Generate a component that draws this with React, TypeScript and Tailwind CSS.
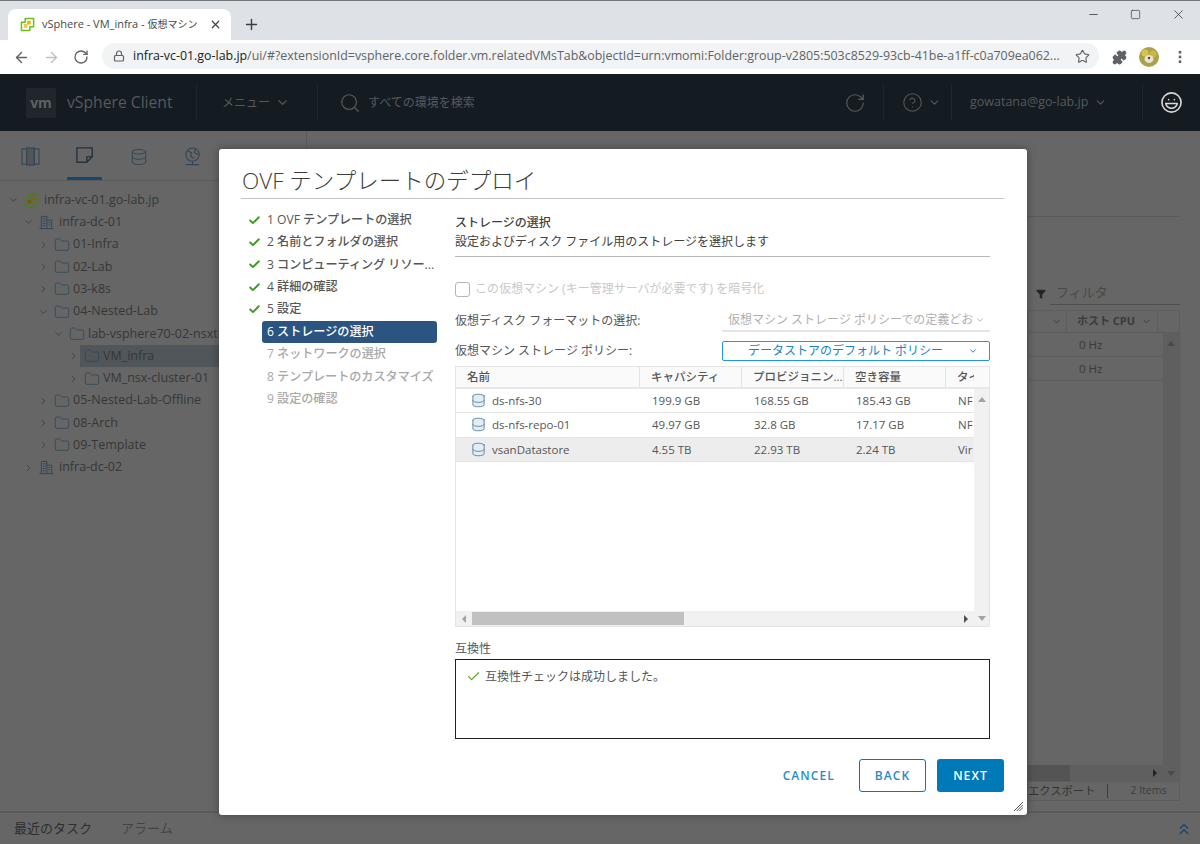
import { ArrowLeft, ArrowRight, Check, ChevronDown, ChevronRight, ChevronsUp, CircleHelp, Database, Filter, Folder, Laugh, Lock, Minus, MoreVertical, Plus, Puzzle, RotateCw, Search, Square, Star, X } from "lucide-react";

const tree = [
  { label: "infra-vc-01.go-lab.jp", pad: "pl-[8px]", open: true, icon: "vc" },
  { label: "infra-dc-01", pad: "pl-[23px]", open: true, icon: "dc" },
  { label: "01-Infra", pad: "pl-[38px]", open: false, icon: "folder" },
  { label: "02-Lab", pad: "pl-[38px]", open: false, icon: "folder" },
  { label: "03-k8s", pad: "pl-[38px]", open: false, icon: "folder" },
  { label: "04-Nested-Lab", pad: "pl-[38px]", open: true, icon: "folder" },
  { label: "lab-vsphere70-02-nsxt-01", pad: "pl-[53px]", open: true, icon: "folder" },
  { label: "VM_infra", pad: "pl-[68px]", open: false, icon: "folder", selected: true },
  { label: "VM_nsx-cluster-01", pad: "pl-[68px]", open: false, icon: "folder" },
  { label: "05-Nested-Lab-Offline", pad: "pl-[38px]", open: false, icon: "folder" },
  { label: "08-Arch", pad: "pl-[38px]", open: false, icon: "folder" },
  { label: "09-Template", pad: "pl-[38px]", open: false, icon: "folder" },
  { label: "infra-dc-02", pad: "pl-[23px]", open: false, icon: "dc" },
];

const steps = [
  { label: "1 OVF テンプレートの選択", state: "done" },
  { label: "2 名前とフォルダの選択", state: "done" },
  { label: "3 コンピューティング リソー...", state: "done" },
  { label: "4 詳細の確認", state: "done" },
  { label: "5 設定", state: "done" },
  { label: "6 ストレージの選択", state: "active" },
  { label: "7 ネットワークの選択", state: "todo" },
  { label: "8 テンプレートのカスタマイズ", state: "todo" },
  { label: "9 設定の確認", state: "todo" },
];

const stores = [
  { name: "ds-nfs-30", cap: "199.9 GB", prov: "168.55 GB", free: "185.43 GB", type: "NF" },
  { name: "ds-nfs-repo-01", cap: "49.97 GB", prov: "32.8 GB", free: "17.17 GB", type: "NF" },
  { name: "vsanDatastore", cap: "4.55 TB", prov: "22.93 TB", free: "2.24 TB", type: "Vir", selected: true },
];

function VcLogo({ dim }: { dim?: boolean }) {
  return (
    <svg viewBox="0 0 16 16" className="h-[15px] w-[15px] shrink-0" fill="none">
      <path d="M5.5 1.5h9v9h-4v4h-9v-9h4z" stroke={dim ? "#4f7a1e" : "#6cbf1f"} strokeWidth="1.6" strokeLinejoin="round" />
      <rect x="7.5" y="4" width="4" height="4" fill={dim ? "#7a6420" : "#f2b21b"} />
      <rect x="4" y="7.5" width="4" height="4" fill={dim ? "#6e5a20" : "#f5c842"} />
    </svg>
  );
}

function DcIcon() {
  return (
    <svg viewBox="0 0 16 16" className="h-[15px] w-[15px] shrink-0" fill="none" stroke="#2f4756" strokeWidth="1">
      <path d="M2.5 14.5v-13h6v13M8.5 5.5h5v9M.5 14.5h15" />
      <path d="M4 4h3M4 6.5h3M4 9h3M4 11.5h3M10 8h2M10 10.5h2" />
    </svg>
  );
}

function TreeRow({ item }: { item: (typeof tree)[number] }) {
  return (
    <div className={`flex h-[22.3px] items-center ${item.pad}`}>
      <span className="flex w-[11px] shrink-0 justify-center text-[#3a3a3a]">
        {item.open ? <ChevronDown size={14} strokeWidth={1.7} /> : <ChevronRight size={14} strokeWidth={1.7} />}
      </span>
      <div className={`ml-[1px] flex h-full flex-1 items-center whitespace-nowrap pl-[4px] ${item.selected ? "bg-[#50565a]" : ""}`}>
        {item.icon === "vc" && <VcLogo dim />}
        {item.icon === "dc" && <DcIcon />}
        {item.icon === "folder" && <Folder size={16} strokeWidth={1.2} className="shrink-0 text-[#2f4756]" />}
        <span className={`text-[12.5px] text-[#363636] ${item.icon === "folder" ? "ml-[3px]" : "ml-[5px]"}`}>{item.label}</span>
      </div>
    </div>
  );
}

function BrowserBar() {
  return (
    <>
      <div className="flex h-[40px] shrink-0 items-end border-t border-[#70757a] bg-[#dee1e6] pl-[8px]">
        <div className="flex h-[31px] w-[223px] items-center rounded-t-[8px] bg-white pl-[12px] pr-[9px]">
          <VcLogo />
          <span className="ml-[7px] whitespace-nowrap text-[11px] text-[#45494e]">
            vSphere - VM_infra - <span className="text-[10px]">仮想マシン</span>
          </span>
          <X size={13} strokeWidth={2.2} className="ml-auto text-[#3c4043]" />
        </div>
        <Plus size={17} strokeWidth={2} className="mb-[7px] ml-[12px] text-[#3c4043]" />
        <div className="ml-auto mb-[18px] flex items-center gap-[30px] pr-[14px] text-[#2f3235]">
          <Minus size={13} strokeWidth={1.4} />
          <Square size={11} strokeWidth={1.4} />
          <X size={15} strokeWidth={1.2} />
        </div>
      </div>
      <div className="flex h-[34px] shrink-0 items-center bg-white pl-[13px] pr-[12px]">
        <ArrowLeft size={17} strokeWidth={2} className="text-[#5f6368]" />
        <ArrowRight size={17} strokeWidth={2} className="ml-[13px] text-[#bdc1c6]" />
        <RotateCw size={16} strokeWidth={2} className="ml-[13px] text-[#5f6368]" />
        <div className="mb-[2px] ml-[13px] flex h-[26px] flex-1 items-center rounded-full bg-[#f1f3f4] pl-[11px] pr-[9px]">
          <Lock size={12} strokeWidth={2.4} className="text-[#5f6368]" />
          <span className="ml-[8px] flex-1 whitespace-nowrap text-[12.4px] text-[#5f6368]">
            <span className="text-[#202124]">infra-vc-01.go-lab.jp</span>/ui/#?extensionId=vsphere.core.folder.vm.relatedVMsTab&amp;objectId=urn:vmomi:Folder:group-v2805:503c8529-93cb-41be-a1ff-c0a709ea062...
          </span>
          <Star size={15} strokeWidth={1.8} className="text-[#5f6368]" />
        </div>
        <Puzzle size={15} strokeWidth={2} className="ml-[13px] fill-[#5f6368] text-[#5f6368]" />
        <svg viewBox="0 0 20 20" className="ml-[12px] h-[20px] w-[20px]">
          <circle cx="10" cy="10" r="10" fill="#a9a24a" />
          <circle cx="6" cy="6" r="3.5" fill="#d9c24e" />
          <circle cx="14" cy="7" r="3.5" fill="#cdb644" />
          <ellipse cx="10" cy="12" rx="4.5" ry="4" fill="#e9e4cf" />
          <circle cx="10" cy="11" r="1.2" fill="#4d4a30" />
        </svg>
        <MoreVertical size={16} strokeWidth={2.4} className="ml-[13px] text-[#5f6368]" />
      </div>
    </>
  );
}

function AppHeader() {
  return (
    <div className="flex h-[57px] shrink-0 items-center bg-[#141b21] text-[#555a5e]">
      <div className="ml-[26px] flex h-[30px] w-[30px] items-center justify-center rounded-[2px] bg-[#20262b] text-[14px] font-bold text-[#5c6165]">vm</div>
      <span className="ml-[11px] w-[129px] whitespace-nowrap text-[15.7px]">vSphere Client</span>
      <div className="h-[37px] w-px bg-[#20272c]" />
      <span className="ml-[25px] text-[12px]">メニュー</span>
      <ChevronDown size={15} strokeWidth={2} className="ml-[5px]" />
      <div className="ml-[27px] h-[37px] w-px bg-[#20272c]" />
      <Search size={22} strokeWidth={1.3} className="ml-[21px]" />
      <span className="ml-[7px] text-[12px]">すべての環境を検索</span>
      <RotateCw size={22} strokeWidth={1.3} className="ml-auto" />
      <div className="ml-[17px] h-[37px] w-px bg-[#20272c]" />
      <CircleHelp size={21} strokeWidth={1.2} className="ml-[18px]" />
      <ChevronDown size={13} strokeWidth={2} className="ml-[5px]" />
      <div className="ml-[10px] h-[37px] w-px bg-[#20272c]" />
      <span className="ml-[18px] w-[118px] whitespace-nowrap text-[12.5px]">gowatana@go-lab.jp</span>
      <ChevronDown size={13} strokeWidth={2} className="ml-[6px]" />
      <div className="ml-[35px] h-[37px] w-px bg-[#20272c]" />
      <Laugh size={23} strokeWidth={1.7} className="ml-[17px] mr-[17px] text-[#d8d8d8]" />
    </div>
  );
}

function Sidebar() {
  return (
    <div className="w-[307px] shrink-0 border-r border-[#5c5c5c]">
      <div className="flex h-[50px] items-end gap-[19px] border-b border-[#5a5a5a] pl-[13px]">
        <div className="flex h-[47px] w-[35px] items-center justify-center">
          <svg viewBox="0 0 20 20" className="h-[19px] w-[19px]" fill="none" stroke="#2f4756" strokeWidth="1.2">
            <rect x="1" y="2" width="5" height="16" />
            <rect x="6" y="1" width="8" height="18" fill="#555" />
            <rect x="14" y="2" width="5" height="16" />
          </svg>
        </div>
        <div className="flex h-[47px] w-[35px] items-center justify-center border-b-[3px] border-[#114a6e]">
          <svg viewBox="0 0 20 20" className="h-[18px] w-[18px]" fill="none" stroke="#22323c" strokeWidth="1.5">
            <path d="M1 2h17v10l-6 6H1zM18 12h-6v6" />
          </svg>
        </div>
        <div className="flex h-[47px] w-[35px] items-center justify-center">
          <Database size={18} strokeWidth={1.3} className="text-[#2f4756]" />
        </div>
        <div className="flex h-[47px] w-[35px] items-center justify-center">
          <svg viewBox="0 0 20 20" className="h-[19px] w-[19px]" fill="none" stroke="#2f4756" strokeWidth="1.2">
            <circle cx="10" cy="8" r="7" />
            <path d="M5 4l4 2-1 4 4 2M13 2l-1 4 4 2M3 18.5h14M10 15v3" />
          </svg>
        </div>
      </div>
      <div className="pt-[8px]">
        {tree.map((item) => (
          <TreeRow key={item.label} item={item} />
        ))}
      </div>
    </div>
  );
}

function MainBehind() {
  return (
    <div className="flex min-w-0 flex-1 flex-col items-end pr-[20px] pt-[85px] text-[#3a3a3a]">
      <div className="h-px w-full bg-[#5a5a5a]" />
      <div className="mt-[65px] flex h-[24px] w-[144px] items-center">
        <Filter size={10} className="fill-[#222] text-[#222]" />
        <span className="ml-[4px] w-[130px] border-b border-[#4f4f4f] pb-[2px] pl-[6px] text-[13px] text-[#4a4a4a]">フィルタ</span>
      </div>
      <div className="mt-[4px] flex h-[491px] w-[153px] flex-col border border-[#5d5d5d]">
        <div className="flex h-[22px] shrink-0 items-center border-b border-[#5d5d5d] text-[11px] font-bold">
          <ChevronDown size={11} className="ml-[23px]" />
          <div className="ml-[4px] flex h-full w-[92px] items-center gap-[6px] border-x border-[#5d5d5d] pl-[10px]">
            <span className="whitespace-nowrap">ホスト CPU</span>
            <ChevronDown size={11} />
          </div>
        </div>
        <div className="flex min-h-0 flex-1">
          <div className="flex-1">
            {[0, 1].map((i) => (
              <div key={i} className="flex h-[24px] items-center border-b border-[#5d5d5d] pl-[51px] text-[11.5px]">0 Hz</div>
            ))}
          </div>
          <div className="flex w-[16px] justify-center bg-[#5f5f5f] pt-[8px]">
            <div className="h-0 w-0 border-x-[4px] border-b-[5px] border-x-transparent border-b-[#4a4a4a]" />
          </div>
        </div>
        <div className="flex h-[16px] shrink-0 items-center bg-[#5f5f5f]">
          <div className="h-full w-[42px] bg-[#545454]" />
          <div className="ml-auto h-0 w-0 border-y-[4px] border-l-[4px] border-y-transparent border-l-[#222]" />
          <div className="ml-[10px] mr-[4px] h-0 w-0 border-x-[4px] border-t-[5px] border-x-transparent border-t-[#4a4a4a]" />
        </div>
        <div className="flex h-[19px] shrink-0 items-center whitespace-nowrap border-t border-[#5d5d5d] text-[11.3px] text-[#333]">
          <span>エクスポート</span>
          <div className="ml-[12px] h-[14px] w-px bg-[#3d3d3d]" />
          <span className="ml-[22px] text-[10.5px] text-[#3d3d3d]">2 Items</span>
        </div>
      </div>
    </div>
  );
}

function WizardSteps() {
  return (
    <div className="w-[214px] shrink-0 pr-[18px] pt-[10px]">
      {steps.map((s) => (
        <div key={s.label} className="flex h-[22.35px] items-center">
          <span className="flex w-[21px] shrink-0 pl-[7px]">
            {s.state === "done" && <Check size={13} strokeWidth={3.4} className="text-[#3a9b23]" />}
          </span>
          <span
            className={`flex h-[22px] flex-1 items-center whitespace-nowrap rounded-[3px] pl-[5px] text-[12.1px] font-medium ${
              s.state === "active" ? "bg-[#2b5580] font-bold text-white" : s.state === "todo" ? "text-[#a8a8a8]" : "text-[#565656]"
            }`}
          >
            {s.label}
          </span>
        </div>
      ))}
    </div>
  );
}

function StoreTable() {
  return (
    <div className="mt-[5px] flex h-[261px] flex-col border border-[#e4e4e4]">
      <div className="flex h-[22px] shrink-0 border-b-2 border-[#e8e8e8] bg-[#fafafa] text-[11.5px] font-medium text-[#565656]">
        <div className="flex w-[184px] items-center border-r border-[#e4e4e4] pl-[11px]">名前</div>
        <div className="flex w-[102px] items-center border-r border-[#e4e4e4] pl-[11px]">キャパシティ</div>
        <div className="flex w-[102px] items-center border-r border-[#e4e4e4] pl-[11px]">プロビジョニン...</div>
        <div className="flex w-[102px] items-center border-r border-[#e4e4e4] pl-[11px]">空き容量</div>
        <div className="mr-[15px] flex min-w-0 flex-1 items-center overflow-hidden whitespace-nowrap pl-[11px]">タイ</div>
      </div>
      <div className="flex min-h-0 flex-1">
        <div className="min-w-0 flex-1">
          {stores.map((s) => (
            <div key={s.name} className={`flex h-[24.3px] items-center border-b border-[#e4e4e4] text-[11.5px] text-[#565656] ${s.selected ? "bg-[#ededed]" : ""}`}>
              <div className="flex w-[184px] items-center pl-[15px]">
                <Database size={15} strokeWidth={1.4} className="fill-[#e3edf3] text-[#4f7f99]" />
                <span className="ml-[6px]">{s.name}</span>
              </div>
              <div className="w-[102px] pl-[12px]">{s.cap}</div>
              <div className="w-[102px] pl-[12px]">{s.prov}</div>
              <div className="w-[102px] pl-[12px]">{s.free}</div>
              <div className="min-w-0 flex-1 overflow-hidden pl-[12px]">{s.type}</div>
            </div>
          ))}
        </div>
        <div className="flex w-[15px] shrink-0 justify-center bg-[#f1f1f1] pt-[8px]">
          <div className="h-0 w-0 border-x-[4px] border-b-[5px] border-x-transparent border-b-[#a3a3a3]" />
        </div>
      </div>
      <div className="flex h-[15px] shrink-0 items-center bg-[#f1f1f1]">
        <div className="ml-[6px] h-0 w-0 border-y-[4px] border-r-[4px] border-y-transparent border-r-[#a3a3a3]" />
        <div className="ml-[6px] h-[13px] w-[212px] bg-[#c1c1c1]" />
        <div className="ml-auto h-0 w-0 border-y-[4px] border-l-[4px] border-y-transparent border-l-[#505050]" />
        <div className="ml-[10px] mr-[3px] h-0 w-0 border-x-[4px] border-t-[5px] border-x-transparent border-t-[#a3a3a3]" />
      </div>
    </div>
  );
}

function DeployModal() {
  return (
    <div className="absolute left-[219px] top-[149px] flex h-[666px] w-[808px] flex-col rounded-[3px] bg-white pl-[22px] pr-[23px] shadow-[0_0_8px_rgba(0,0,0,0.35)]">
      <h1 className="mt-[14px] h-[36px] border-b border-[#c4c4c4] pl-[1px] text-[22.5px] font-light leading-[36px] text-[#3c3c3c]">OVF テンプレートのデプロイ</h1>
      <div className="flex flex-1">
        <WizardSteps />
        <div className="w-[535px] pt-[14px]">
          <div className="border-b border-[#b9b9b9] pb-[5px] text-[12px] leading-[19px] text-[#3f3f3f]">
            <div className="font-medium">ストレージの選択</div>
            <div>設定およびディスク ファイル用のストレージを選択します</div>
          </div>
          <div className="mt-[24px] flex h-[16px] items-center">
            <div className="h-[15px] w-[15px] rounded-[3px] border border-[#b5b5b5]" />
            <span className="ml-[5px] text-[12px] text-[#c8c8c8]">この仮想マシン (キー管理サーバが必要です) を暗号化</span>
          </div>
          <div className="mt-[13px] flex h-[22px] items-center">
            <span className="w-[267px] text-[12px] text-[#565656]">仮想ディスク フォーマットの選択:</span>
            <div className="flex h-full min-w-0 flex-1 items-center border-b-2 border-[#e4e4e4] pl-[6px] pr-[5px]">
              <span className="flex-1 overflow-hidden whitespace-nowrap text-[12px] text-[#b0b0b0]">仮想マシン ストレージ ポリシーでの定義どおり</span>
              <ChevronDown size={10} className="ml-[2px] shrink-0 text-[#a8a8a8]" />
            </div>
          </div>
          <div className="mt-[9px] flex h-[20px] items-center">
            <span className="w-[267px] text-[12px] text-[#565656]">仮想マシン ストレージ ポリシー:</span>
            <div className="flex h-full flex-1 items-center rounded-[2px] border border-[#1d9ad6] pl-[25px] pr-[11px]">
              <span className="flex-1 whitespace-nowrap text-[12px] text-[#1b86bd]">データストアのデフォルト ポリシー</span>
              <ChevronDown size={10} strokeWidth={2.4} className="text-[#1b86bd]" />
            </div>
          </div>
          <StoreTable />
          <div className="mt-[14px] text-[12px] leading-[16px] text-[#565656]">互換性</div>
          <div className="mt-[2px] flex h-[80px] items-start border border-[#222] pl-[10px] pt-[9px]">
            <Check size={15} strokeWidth={1.8} className="text-[#62a420]" />
            <span className="ml-[4px] text-[12px] leading-[15px] text-[#565656]">互換性チェックは成功しました。</span>
          </div>
        </div>
      </div>
      <div className="mb-[23px] flex items-center justify-end text-[12px] font-semibold tracking-[1.1px]">
        <button className="mr-[24px] text-[#1f8dc7]">CANCEL</button>
        <button className="h-[33px] w-[67px] rounded-[3px] border border-[#0079b8] text-[#1f8dc7]">BACK</button>
        <button className="ml-[11px] h-[33px] w-[67px] rounded-[3px] bg-[#0079b8] text-white">NEXT</button>
      </div>
      <svg viewBox="0 0 10 10" className="absolute bottom-[4px] right-[4px] h-[9px] w-[9px]" stroke="#444" strokeWidth="1">
        <path d="M0 10L10 0M3 10l7-7M6 10l4-4" />
      </svg>
    </div>
  );
}

export default function App() {
  return (
    <div className="relative flex h-[844px] w-[1200px] flex-col overflow-hidden bg-[#666666] font-['Open_Sans','Noto_Sans_CJK_JP',sans-serif]">
      <BrowserBar />
      <AppHeader />
      <div className="flex min-h-0 flex-1">
        <Sidebar />
        <MainBehind />
      </div>
      <div className="flex h-[33px] shrink-0 items-center border-t-2 border-[#5a5a5a] pl-[14px] pr-[7px] text-[13px]">
        <span className="text-[#2e2e2e]">最近のタスク</span>
        <span className="ml-[29px] text-[#444]">アラーム</span>
        <ChevronsUp size={18} strokeWidth={1.8} className="ml-auto text-[#15466b]" />
      </div>
      <DeployModal />
    </div>
  );
}
